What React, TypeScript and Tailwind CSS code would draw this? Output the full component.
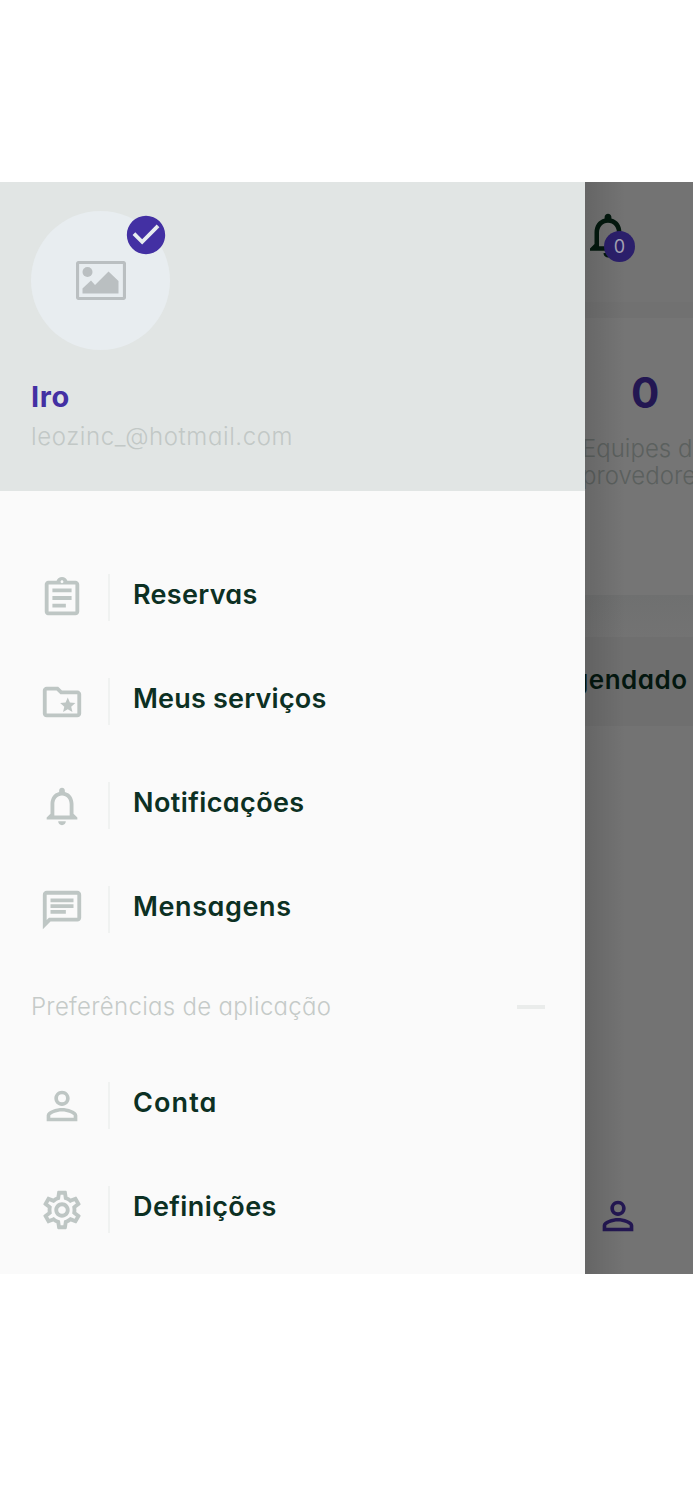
import React from "react";
import type { IconType } from "react-icons";
import {
  MdCheckCircle,
  MdNotificationsNone,
  MdOutlineAssignment,
  MdOutlineChat,
  MdOutlineSettings,
  MdPersonOutline,
} from "react-icons/md";

type Item = {
  icon: IconType | typeof FolderStar;
  label: string;
  tracking: string;
};

// folder outline with a solid star
function FolderStar({ className }: { className?: string }) {
  return (
    <svg viewBox="0 0 24 24" fill="currentColor" className={className}>
      <path d="M20 6h-8l-2-2H4c-1.100 0-2 .9-2 2v12c0 1.100.9 2 2 2h16c1.100 0 2-.9 2-2V8c0-1.100-.9-2-2-2zm0 12H4V6h5.170l2 2H20v10z" />
      <path d="M12.550 17.200 15 15.780l2.450 1.420-.65-2.780 2.170-1.870-2.850-.24L15 9.700l-1.120 2.610-2.850.24 2.170 1.870z" />
    </svg>
  );
}

const mainItems: Item[] = [
  { icon: MdOutlineAssignment, label: "Reservas", tracking: "tracking-[0.3px]" },
  { icon: FolderStar, label: "Meus serviços", tracking: "tracking-[0.2px]" },
  { icon: MdNotificationsNone, label: "Notificações", tracking: "tracking-[0.4px]" },
  { icon: MdOutlineChat, label: "Mensagens", tracking: "tracking-[0.6px]" },
];

const preferenceItems: Item[] = [
  { icon: MdPersonOutline, label: "Conta", tracking: "tracking-[1.1px]" },
  { icon: MdOutlineSettings, label: "Definições", tracking: "tracking-[0.4px]" },
];

function DrawerItem({ icon: Icon, label, tracking }: Item) {
  return (
    <li className="flex h-[104px] items-center pl-[39px]">
      <Icon className="mt-px size-[46px] text-[#bec6c4]" />
      <span className="ml-[23px] h-[47px] w-0.5 bg-[#f0f2f1]" />
      <span
        className={`-mt-1 ml-[23px] text-[27px] font-semibold whitespace-nowrap text-[#0c3023] ${tracking}`}
      >
        {label}
      </span>
    </li>
  );
}

function Avatar() {
  return (
    <div className="relative flex size-[139px] items-center justify-center rounded-full bg-[#e8edf0]">
      <svg width="50" height="39" viewBox="0 0 50 39" className="block text-[#babfc1]">
        <rect x="1.5" y="1.5" width="47" height="36" rx="1.5" fill="none" stroke="currentColor" strokeWidth="3.2" />
        <circle cx="11.5" cy="11" r="5" fill="currentColor" />
        <path d="M6.5 32.5v-5L15 19.5l4 4.5L32.500 10.500 42.500 20v12.500z" fill="currentColor" />
      </svg>
      <span className="absolute top-[5px] left-[96px] size-[38px]">
        <span className="absolute inset-2 bg-[#e8edf0]" />
        <MdCheckCircle className="absolute -top-1 -left-1 size-[46px] text-[#4330a3]" />
      </span>
    </div>
  );
}

function Drawer() {
  return (
    <aside className="flex w-[585px] shrink-0 flex-col bg-[#fafafa]">
      <header className="h-[309px] bg-[#e1e5e4] pt-[29px] pl-[31px]">
        <Avatar />
        <h1 className="mt-[27px] text-[29px] leading-10 font-bold tracking-[0.6px] text-[#4330a3]">
          Iro
        </h1>
        <p className="mt-0.5 text-[24px] leading-9 font-light tracking-[0.6px] text-[#c2c8c6]">
          leozinc_@hotmail.com
        </p>
      </header>
      <ul className="pt-[54px]">
        {mainItems.map((item) => (
          <DrawerItem key={item.label} {...item} />
        ))}
      </ul>
      <div className="flex h-[92px] items-center justify-between pr-10 pl-[31px]">
        <span className="text-[24px] font-light tracking-[0.3px] text-[#c5cac8]">
          Preferências de aplicação
        </span>
        <span className="h-1 w-7 bg-[#eaeceb]" />
      </div>
      <ul>
        {preferenceItems.map((item) => (
          <DrawerItem key={item.label} {...item} />
        ))}
      </ul>
    </aside>
  );
}

function DimmedPage() {
  return (
    <main className="relative flex min-w-0 flex-1 flex-col overflow-hidden bg-[#737373]">
      <div className="h-[120px] pt-[26px]">
        <div className="relative -ml-1 size-[54px]">
          <MdNotificationsNone className="size-[54px] text-[#03180e]" />
          <span className="absolute top-[23px] left-[23px] flex size-[31px] items-center justify-center rounded-full bg-[#2b1f6b] text-[18px] text-[#a5a3b4]">
            0
          </span>
        </div>
      </div>
      <div className="h-[16px] bg-[#717171]" />
      <section className="h-[277px] bg-[#757575] pt-12">
        <p className="pl-[46px] text-[42px] leading-[54px] font-bold text-[#231752]">0</p>
        <p className="mt-[15px] -ml-[3px] text-[24px] leading-[27px] font-light whitespace-nowrap text-[#5b605e]">
          Equipes d
          <br />
          provedore
        </p>
      </section>
      <div className="h-[42px] bg-gradient-to-b from-[#6f7070] to-[#737373]" />
      <div className="flex h-[89px] items-center bg-[#6f6f6f]">
        <span className="-mt-1 -ml-[13px] text-[26px] font-semibold tracking-[0.5px] whitespace-nowrap text-[#04170f]">
          gendado
        </span>
      </div>
      <div className="flex flex-1 items-end pb-[35px] pl-[10px]">
        <MdPersonOutline className="size-[46px] text-[#231752]" />
      </div>
      {/* drawer shadow */}
      <div className="absolute inset-y-0 left-0 w-10 bg-gradient-to-r from-black/12 to-transparent" />
    </main>
  );
}

export default function App() {
  return (
    <div className="h-[1500px] w-[693px] overflow-hidden bg-white pt-[182px] font-['Inter',sans-serif] [font-feature-settings:'cv11']">
      <div className="flex h-[1092px] overflow-hidden">
        <Drawer />
        <DimmedPage />
      </div>
    </div>
  );
}
